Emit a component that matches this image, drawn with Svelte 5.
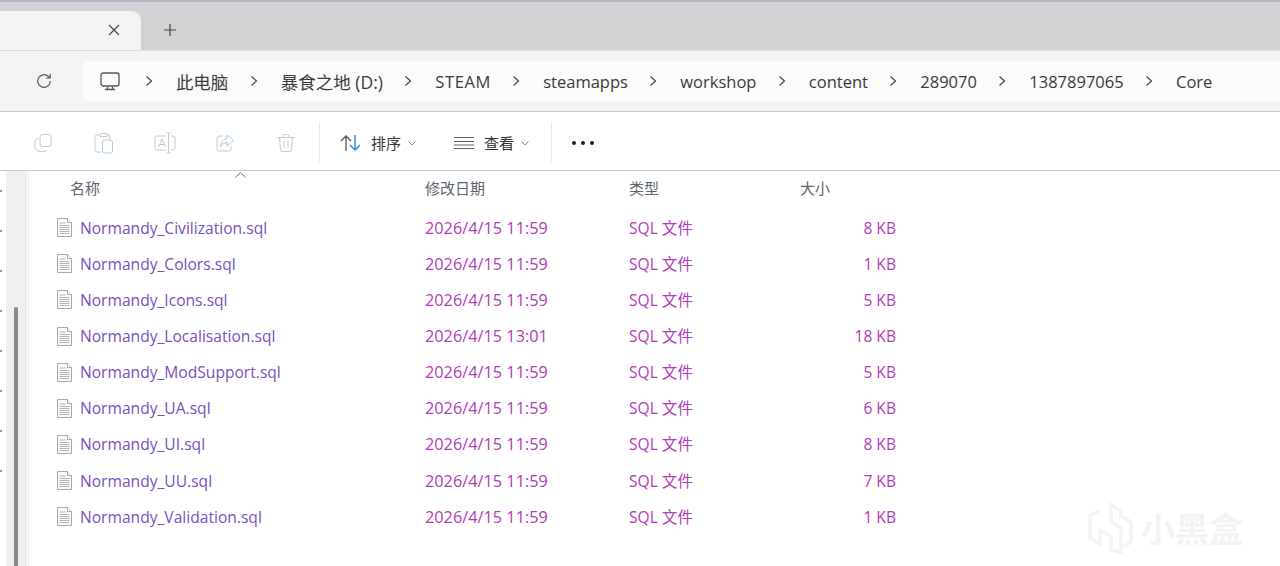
<script lang="ts">
    const crumbs = [
        { label: '此电脑', cls: 'cjk' },
        { label: '暴食之地 (D:)', cls: 'cjk' },
        { label: 'STEAM', cls: 'caps' },
        { label: 'steamapps', cls: '' },
        { label: 'workshop', cls: '' },
        { label: 'content', cls: '' },
        { label: '289070', cls: '' },
        { label: '1387897065', cls: '' },
        { label: 'Core', cls: '' }
    ];

    const files = [
        { name: 'Normandy_Civilization.sql', date: '2026/4/15 11:59', size: '8 KB' },
        { name: 'Normandy_Colors.sql', date: '2026/4/15 11:59', size: '1 KB' },
        { name: 'Normandy_Icons.sql', date: '2026/4/15 11:59', size: '5 KB' },
        { name: 'Normandy_Localisation.sql', date: '2026/4/15 13:01', size: '18 KB' },
        { name: 'Normandy_ModSupport.sql', date: '2026/4/15 11:59', size: '5 KB' },
        { name: 'Normandy_UA.sql', date: '2026/4/15 11:59', size: '6 KB' },
        { name: 'Normandy_UI.sql', date: '2026/4/15 11:59', size: '8 KB' },
        { name: 'Normandy_UU.sql', date: '2026/4/15 11:59', size: '7 KB' },
        { name: 'Normandy_Validation.sql', date: '2026/4/15 11:59', size: '1 KB' }
    ];
</script>

<div class="window">
    <div class="tabbar">
        <div class="tab">
            <svg class="tab-close" width="12" height="12" viewBox="0 0 12 12"><path d="M1 1l10 10M11 1L1 11" stroke="#444" fill="none" stroke-width="1.1" /></svg>
        </div>
        <svg class="tab-new" width="14" height="14" viewBox="0 0 14 14"><path d="M7 1v12M1 7h12" stroke="#444" fill="none" stroke-width="1.2" /></svg>
    </div>

    <div class="addressbar">
        <svg class="refresh" width="18" height="18" viewBox="0 0 18 18"><path d="M15.3 9a6.3 6.3 0 1 1-2-4.6L15 6M15.2 1.8V6h-4.200" stroke="#555" fill="none" stroke-width="1.2" /></svg>
        <div class="address">
            <svg class="monitor" width="20" height="19" viewBox="0 0 20 19">
                <rect x="1" y="1" width="18" height="13" rx="2.500" stroke="#555" fill="none" stroke-width="1.3" />
                <path d="M7.500 15v2M12.500 15v2M5 17.500h10" stroke="#555" fill="none" stroke-width="1.3" />
            </svg>
            {#each crumbs as crumb}
                <svg class="chevron" width="8" height="12" viewBox="0 0 8 12"><path d="M1.500 1.500L6.500 6l-5 4.500" stroke="#444" fill="none" stroke-width="1.2" /></svg>
                <span class="crumb {crumb.cls}">{crumb.label}</span>
            {/each}
        </div>
    </div>

    <div class="toolbar">
        <div class="tool">
            <svg width="20" height="20" viewBox="0 0 20 20">
                <rect x="7" y="1.500" width="11" height="12" rx="2.500" stroke="#a9cbe6" fill="none" />
                <path d="M5 5.500a3 3 0 0 0-3 3v5a5 5 0 0 0 5 5h4a3 3 0 0 0 2.500-2" stroke="#c9c9c9" fill="none" />
            </svg>
        </div>
        <div class="tool">
            <svg width="20" height="22" viewBox="0 0 20 22">
                <path d="M6 3H3a2 2 0 0 0-2 2v13a2 2 0 0 0 2 2h4M13 3h1a2 2 0 0 1 2 2v2M6 1.500h7v3H6z" stroke="#c9c9c9" fill="none" />
                <rect x="8.500" y="8" width="10" height="13" rx="2" stroke="#a9cbe6" fill="none" />
            </svg>
        </div>
        <div class="tool">
            <svg width="22" height="22" viewBox="0 0 22 22">
                <path d="M12 4H3a2 2 0 0 0-2 2v10a2 2 0 0 0 2 2h9M17 4h2a2 2 0 0 1 2 2v10a2 2 0 0 1-2 2h-2" stroke="#c9c9c9" fill="none" />
                <path d="M14.500 1v20M12.500 1h4M12.500 21h4" stroke="#c9c9c9" fill="none" />
                <path d="M4.500 15L8 7l3.500 8M5.800 12.500h4.400" stroke="#a9cbe6" fill="none" />
            </svg>
        </div>
        <div class="tool">
            <svg width="20" height="20" viewBox="0 0 20 20">
                <path d="M8 3H4.500A2.500 2.500 0 0 0 2 5.500v10A2.500 2.500 0 0 0 4.500 18h9a2.500 2.500 0 0 0 2.500-2.500V13" stroke="#c9c9c9" fill="none" />
                <path d="M12 2l6.500 5.500L12 13V9.700c-3 0-5 1.200-6.500 3.800.4-4.300 2.800-7.300 6.500-7.800z" stroke="#a9cbe6" fill="none" />
            </svg>
        </div>
        <div class="tool">
            <svg width="20" height="20" viewBox="0 0 20 20">
                <path d="M1.500 4.500h17M7 4.500V3a1.500 1.500 0 0 1 1.500-1.500h3A1.500 1.500 0 0 1 13 3v1.500M3.500 4.500l1 12a2 2 0 0 0 2 2h7a2 2 0 0 0 2-2l1-12M8 8v7M12 8v7" stroke="#c9c9c9" fill="none" />
            </svg>
        </div>
        <div class="divider first"></div>
        <svg class="sort-icon" width="21" height="18" viewBox="0 0 21 18">
            <path d="M6 17V2M1 7l5-5 5 5" stroke="#555" fill="none" stroke-width="1.300" />
            <path d="M15 1v15M10 11l5 5 5-5" stroke="#2f8fdc" fill="none" stroke-width="1.500" />
        </svg>
        <span class="tool-label">排序</span>
        <svg class="caret" width="8" height="5" viewBox="0 0 8 5"><path d="M.5.500L4 4 7.500.500" stroke="#888" fill="none" /></svg>
        <svg class="view-icon" width="20" height="14" viewBox="0 0 20 14"><path d="M0 1.500h20M0 5.500h20M0 9h20M0 12.500h20" stroke="#666" fill="none" stroke-width="1.200" /></svg>
        <span class="tool-label">查看</span>
        <svg class="caret" width="8" height="5" viewBox="0 0 8 5"><path d="M.5.500L4 4 7.500.500" stroke="#888" fill="none" /></svg>
        <div class="divider second"></div>
        <div class="more"><i></i><i></i><i></i></div>
    </div>

    <div class="body">
        <div class="nav">
            <div class="edge">
                {#each [0, 1, 2, 3, 4, 5, 6, 7] as _}
                    <i></i>
                {/each}
            </div>
            <div class="track"><div class="thumb"></div></div>
        </div>

        <div class="list">
            <svg class="sort-arrow" width="11" height="6" viewBox="0 0 11 6"><path d="M.5 5.500l5-5 5 5" stroke="#777" fill="none" /></svg>
            <div class="row head">
                <span class="head-name">名称</span>
                <span>修改日期</span>
                <span>类型</span>
                <span>大小</span>
            </div>
            {#each files as file}
                <div class="row item">
                    <span class="name">
                        <svg width="15" height="19" viewBox="0 0 15 19">
                            <path d="M.5.500h10l4 4v14H.5z" fill="#fafafa" stroke="#a8a8a8" />
                            <path d="M10.500.500v4h4" fill="#fff" stroke="#a8a8a8" />
                            <path d="M2.500 5h6M2.500 7.500h10M2.500 9.500h10M2.500 11.500h10M2.500 13.500h10M2.500 15.500h10" stroke="#b4b4b4" />
                        </svg>
                        {file.name}
                    </span>
                    <span class="date">{file.date}</span>
                    <span class="type">SQL 文件</span>
                    <span class="size">{file.size}</span>
                </div>
            {/each}
        </div>
    </div>

    <div class="watermark">
        <svg width="46" height="52" viewBox="0 0 46 52">
            <path d="M12 8L2 14v22l10 6V28l11 6v14l10 3V26l-10-6V3l10 6v5l10 6v20l-8 5" stroke="#f3f3f3" fill="none" stroke-width="3.500" />
        </svg>
        <span>小黑盒</span>
    </div>
</div>

<style>
    :global(body) {
        margin: 0;
        background: #fff;
    }

    .window {
        position: relative;
        width: 1280px;
        height: 566px;
        overflow: hidden;
        display: flex;
        flex-direction: column;
        font-family: "Open Sans", "Noto Sans CJK SC", sans-serif;
        font-size: 15.600px;
        line-height: 20px;
        color: #333;
    }

    .tabbar {
        height: 48px;
        border-top: 2px solid #b3b3c3;
        background: #d2d2d4;
        display: flex;
        align-items: flex-end;
        flex-shrink: 0;
    }

    .tab {
        width: 141px;
        height: 39px;
        background: #f3f3f3;
        border-radius: 0 9px 0 0;
        display: flex;
        justify-content: flex-end;
        align-items: flex-start;
    }

    .tab-close {
        margin: 13px 21px 0 0;
    }

    .tab-new {
        margin: 0 0 13px 22px;
    }

    .addressbar {
        height: 60px;
        background: #f3f3f3;
        border-top: 1px solid #dcdcdc;
        border-bottom: 1px solid #c6c6c6;
        display: flex;
        align-items: center;
        flex-shrink: 0;
    }

    .refresh {
        margin-left: 35px;
    }

    .address {
        margin-left: 29px;
        flex: 1;
        height: 40px;
        background: #fbfbfb;
        border-radius: 7px 0 0 7px;
        display: flex;
        align-items: center;
        padding-left: 18px;
    }

    .monitor {
        margin-right: 3.500px;
    }

    .chevron {
        margin: 0 23.200px 0 21.200px;
    }

    .crumb {
        white-space: nowrap;
        font-size: 16.500px;
        color: #3a3a3a;
        padding-top: 2px;
    }

    .crumb.cjk {
        font-size: 17.500px;
    }

    .crumb.caps {
        letter-spacing: 0.600px;
    }

    .toolbar {
        height: 54px;
        padding: 4px 0 0 13px;
        border-bottom: 1px solid #c9c9c9;
        background: #fff;
        display: flex;
        align-items: center;
        flex-shrink: 0;
    }

    .tool {
        width: 60.700px;
        display: flex;
        justify-content: center;
    }

    .divider {
        width: 1px;
        height: 40px;
        background: #e8e8e8;
        margin-top: -2px;
    }

    .divider.first {
        margin-left: 2.500px;
    }

    .divider.second {
        margin-left: 22px;
    }

    .sort-icon {
        margin-left: 20px;
    }

    .tool-label {
        margin-left: 10px;
        font-size: 15px;
        color: #333;
    }

    .caret {
        margin-left: 7px;
    }

    .view-icon {
        margin-left: 38px;
    }

    .more {
        margin-left: 20px;
        display: flex;
        gap: 5px;
    }

    .more i {
        width: 4px;
        height: 4px;
        border-radius: 50%;
        background: #222;
    }

    .body {
        flex: 1;
        display: flex;
        min-height: 0;
    }

    .nav {
        width: 28px;
        display: flex;
        border-right: 1px solid #eeeeee;
        flex-shrink: 0;
    }

    .edge {
        width: 6px;
        padding-top: 19px;
        display: flex;
        flex-direction: column;
        gap: 38px;
    }

    .edge i {
        width: 2px;
        height: 2px;
        background: #999;
    }

    .track {
        width: 21px;
        background: #f0f0f0;
        padding: 136px 0 0 8px;
        box-sizing: border-box;
    }

    .thumb {
        width: 4px;
        height: 100%;
        background: #8a8a8a;
        border-radius: 2px 2px 0 0;
    }

    .list {
        position: relative;
        flex: 1;
        padding: 0 0 0 28px;
    }

    .sort-arrow {
        position: absolute;
        left: 206px;
        top: 1px;
    }

    .row {
        display: grid;
        grid-template-columns: 368px 204px 171px 96px;
        align-items: center;
        height: 36.125px;
        white-space: nowrap;
    }

    .row.head {
        height: 34px;
        margin-bottom: 4.600px;
        font-size: 15px;
        color: #5c6670;
    }

    .head-name {
        padding-left: 13px;
    }

    .name {
        display: flex;
        align-items: center;
        gap: 8px;
        color: #7a4fc0;
    }

    .date,
    .type,
    .size {
        color: #b13cb8;
    }

    .date {
        font-size: 16.300px;
    }

    .size {
        text-align: right;
    }

    .watermark {
        position: absolute;
        right: 37px;
        bottom: 12px;
        display: flex;
        align-items: center;
        gap: 7px;
        color: #f3f3f3;
        font-family: "Noto Sans CJK SC", sans-serif;
        font-size: 34px;
        line-height: 40px;
        font-weight: 700;
    }
</style>
